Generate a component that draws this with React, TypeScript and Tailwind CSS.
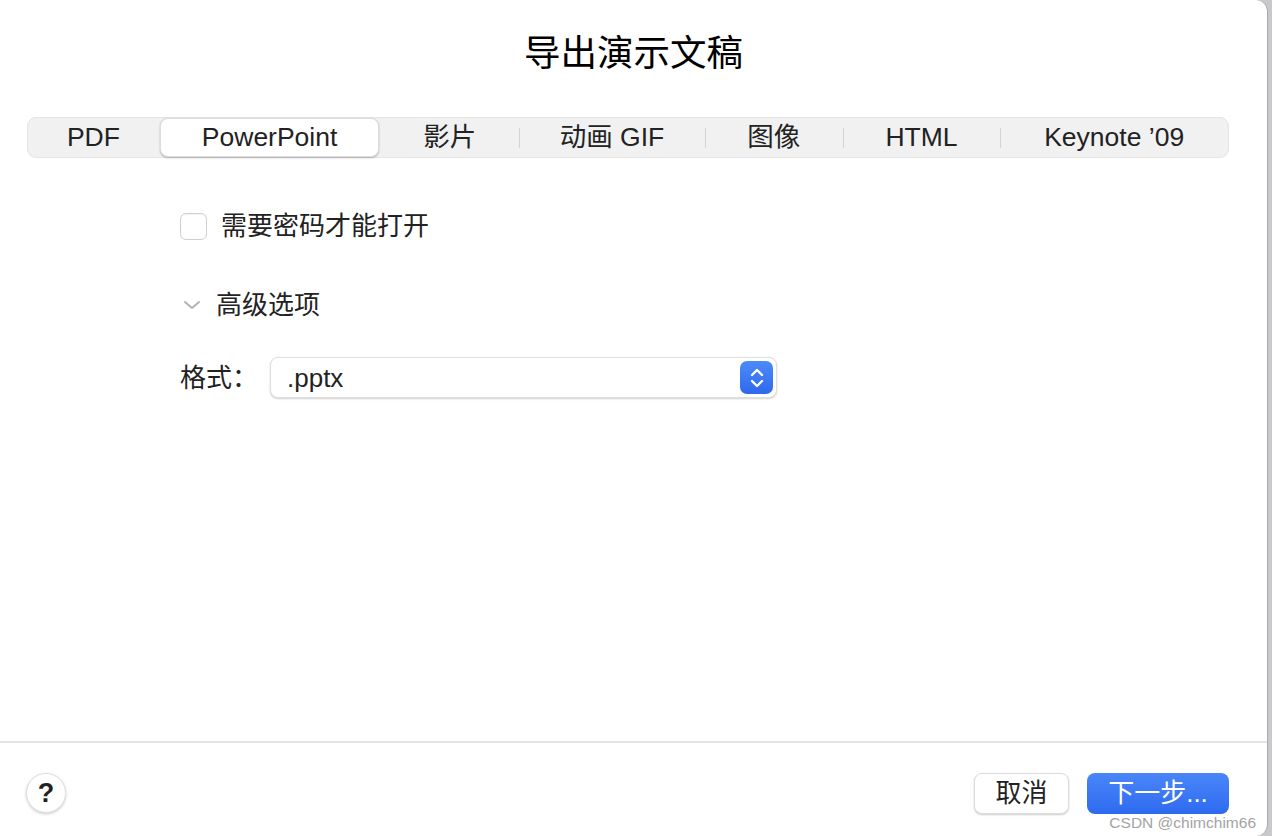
import React from 'react';

const tabs = [
  { label: 'PDF', w: 'w-[131px]' },
  { label: 'PowerPoint', w: 'w-[222px]' },
  { label: '影片', w: 'w-[139px]' },
  { label: '动画 GIF', w: 'w-[186px]' },
  { label: '图像', w: 'w-[138px]' },
  { label: 'HTML', w: 'w-[158px]' },
  { label: 'Keynote ’09', w: 'w-[228px]' },
];

const font = { fontFamily: '"Liberation Sans", "Noto Sans CJK SC", sans-serif' };

export default function App() {
  const active = 1;
  return (
    <div className="w-[1272px] h-[836px] bg-[#c9c9cc] overflow-hidden" style={font}>
      <div className="w-[1268px] h-[836px] bg-white rounded-tr-[12px] rounded-br-[12px] border-r border-[#a9a9ad] flex flex-col text-[#222]">
        <div className="h-[117px] pt-[30px] flex justify-center">
          <h1 className="text-[36.5px] leading-[48px] text-black">导出演示文稿</h1>
        </div>

        <div className="ml-[27px] w-[1202px] h-[41px] bg-[#f1f1f1] border border-[#e4e4e4] rounded-[9px] flex items-center">
          {tabs.map((t, i) => {
            const sep = i > 1 && i !== active + 1;
            return (
              <div key={t.label} className={`${t.w} h-full flex items-center relative`}>
                {sep && <span className="absolute left-0 top-[10px] h-[20px] w-px bg-[#d4d4d4]" />}
                <div
                  className={`flex-1 h-full flex items-center justify-center text-[26.5px] ${
                    i === active ? 'bg-white rounded-[8px] shadow-[0_1px_2px_rgba(0,0,0,0.25)] border border-[#dcdcdc] mx-[1px]' : ''
                  }`}
                >
                  {t.label}
                </div>
              </div>
            );
          })}
        </div>

        <div className="pl-[180px] pt-[54px]">
          <div className="flex items-center gap-[14px] h-[28px]">
            <div className="w-[27px] h-[27px] rounded-[6px] border border-[#cfcfcf] bg-white shadow-[inset_0_1px_1px_rgba(0,0,0,0.05)]" />
            <span className="text-[26px] leading-none">需要密码才能打开</span>
          </div>

          <div className="flex items-center gap-[14px] mt-[50px] h-[30px]">
            <svg width="20" height="12" viewBox="0 0 20 12" className="ml-[2px]">
              <path d="M3 3 L10 9 L17 3" fill="none" stroke="#b3b3b3" strokeWidth="2" strokeLinecap="round" strokeLinejoin="round" />
            </svg>
            <span className="text-[26px] leading-none">高级选项</span>
          </div>

          <div className="flex items-center mt-[37px]">
            <span className="text-[26px] w-[90px] leading-none">格式：</span>
            <div className="w-[507px] h-[41px] bg-white rounded-[8px] border border-[#dedede] shadow-[0_1px_2px_rgba(0,0,0,0.18)] flex items-center justify-between pl-[16px] pr-[3px]">
              <span className="text-[26px] leading-none">.pptx</span>
              <div className="w-[33px] h-[33px] rounded-[7px] bg-gradient-to-b from-[#4d8bf8] to-[#2e68ee] flex items-center justify-center">
                <svg width="18" height="24" viewBox="0 0 18 24">
                  <path d="M4 9 L9 4 L14 9 M4 15 L9 20 L14 15" fill="none" stroke="white" strokeWidth="2.4" strokeLinecap="round" strokeLinejoin="round" />
                </svg>
              </div>
            </div>
          </div>
        </div>

        <div className="flex-1" />

        <div className="h-[95px] border-t-2 border-[#e4e4e4] flex items-start relative">
          <div className="ml-[26px] mt-[30px] w-[40px] h-[40px] rounded-full bg-white border border-[#e0e0e0] shadow-[0_1px_3px_rgba(0,0,0,0.2)] flex items-center justify-center text-[27px] font-semibold text-[#222]">
            ?
          </div>
          <div className="flex-1" />
          <div className="mt-[30px] flex gap-[18px] mr-[38px]">
            <div className="w-[95px] h-[41px] rounded-[8px] bg-white border border-[#dcdcdc] shadow-[0_1px_2px_rgba(0,0,0,0.2)] flex items-center justify-center text-[26px]">
              取消
            </div>
            <div className="w-[142px] h-[41px] rounded-[8px] bg-gradient-to-b from-[#4a86f8] to-[#2e6af0] flex items-center justify-center text-[26px] text-white">
              下一步...
            </div>
          </div>
          <span className="absolute right-[11px] bottom-[6px] text-[15.5px] leading-none text-[#a3a3a3]">CSDN @chimchim66</span>
        </div>
      </div>
    </div>
  );
}
